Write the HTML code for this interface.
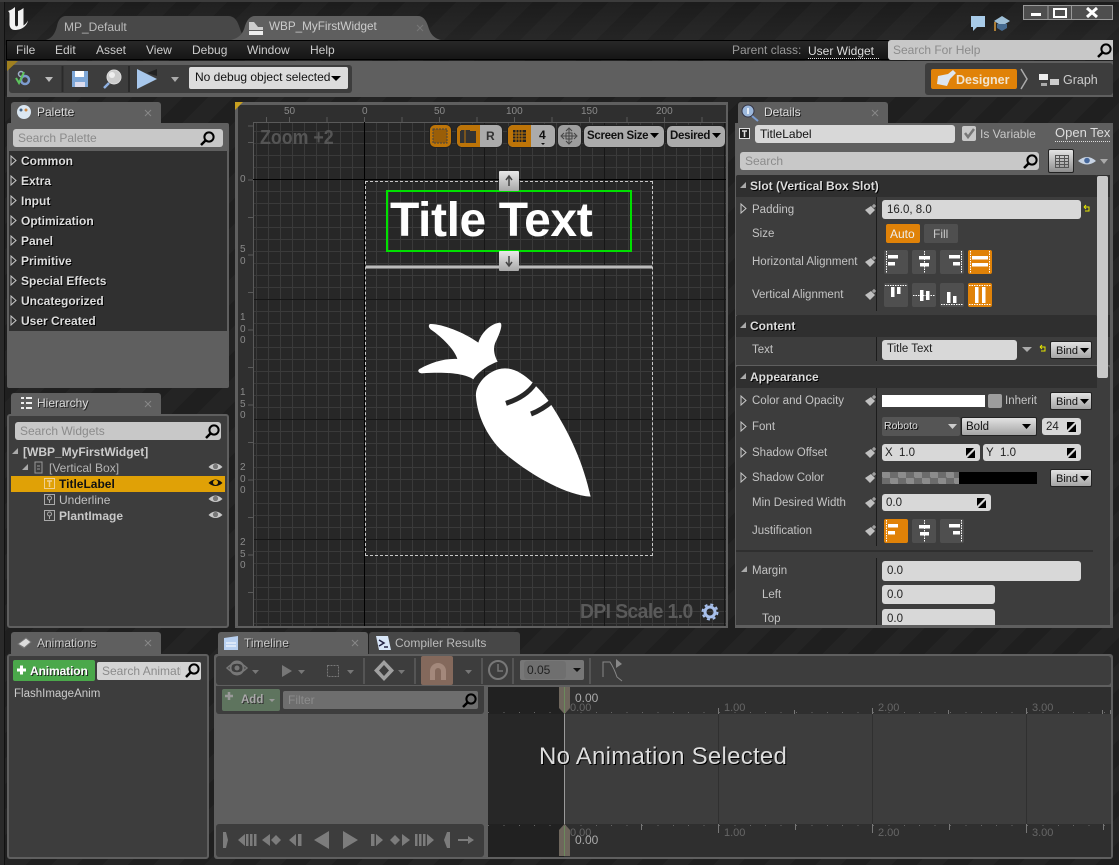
<!DOCTYPE html>
<html><head><meta charset="utf-8"><style>
html,body{margin:0;padding:0;background:#222}
#r{position:relative;width:1119px;height:865px;overflow:hidden;font-family:"Liberation Sans",sans-serif;font-size:12px;color:#c4c4c4;background:#212121 repeating-linear-gradient(135deg,#242424 0 18px,#1f1f1f 18px 36px)}
#r div{position:absolute;box-sizing:border-box}
.t{white-space:nowrap;line-height:16px;height:16px}
.b{font-weight:bold;color:#ddd;text-shadow:1px 1px 0 #000}
.f{background:#d8d8d8;border-radius:3px;color:#222}
.s{background:#c8c8c8;border-radius:3px;color:#8b8b8b}
.tab{background:#5f5f5f;border-radius:3px 3px 0 0}
.h{background:#2f2f2f;border-radius:2px 2px 0 0}
.bd{background:linear-gradient(#e2e2e2,#a4a4a4);border:1px solid #222;border-radius:2px;color:#111}
.g{background:#ababab;border-radius:6px;color:#111;border:1px solid #222}
.o{background:#bd7408}
.rl{font-size:10px;color:#8a8a8a;line-height:11.5px !important;height:36px !important}
svg{position:absolute;left:0;top:0}
</style></head><body><div id="r">

<div style="left:0;top:0;width:1119px;height:40px;background:linear-gradient(rgba(0,0,0,.12),rgba(70,70,70,.14))"></div>
<div style="left:0;top:0;width:5px;height:865px;background:#2a2a2a;border-right:1px solid #111"></div>
<div style="left:0;top:0;width:1119px;height:2px;background:#3c3c3c"></div>

<!-- window tabs -->
<svg width="460" height="41" viewBox="0 0 460 41">
<path d="M46 40C52 38 55 34 57 26C58 20 61 16 66 16H228C234 16 237 20 239 26L244 40Z" fill="#484848"/>
<path d="M231 40C239 38 243 34 245 26C247 20 250 16 255 16H418C423 16 426 20 428 26C430 33 433 38 441 40Z" fill="#5f5f5f"/>
</svg>
<div class="t" style="left:64px;top:19px;color:#bbb">MP_Default</div>
<div class="t" style="left:269px;top:19px;color:#ccc;font-size:11.7px">WBP_MyFirstWidget</div>

<!-- menu -->
<div style="left:6px;top:40px;width:1107px;height:20px;background:linear-gradient(#282828,#161616);border:1px solid #000;border-right:0"></div>
<div class="t" style="left:16px;top:42px;color:#ccc">File</div>
<div class="t" style="left:55px;top:42px;color:#ccc">Edit</div>
<div class="t" style="left:96px;top:42px;color:#ccc">Asset</div>
<div class="t" style="left:146px;top:42px;color:#ccc">View</div>
<div class="t" style="left:192px;top:42px;color:#ccc">Debug</div>
<div class="t" style="left:247px;top:42px;color:#ccc">Window</div>
<div class="t" style="left:310px;top:42px;color:#ccc">Help</div>
<div class="t" style="left:732px;top:42px;color:#999">Parent class:</div>
<div class="t" style="left:808px;top:43px;color:#ddd;border-bottom:1px dotted #ddd;height:16px;width:71px;overflow:hidden">User Widget</div>
<div class="s" style="left:888px;top:40px;width:225px;height:20px;border-radius:3px 0 0 3px"></div>
<div class="t" style="left:893px;top:42px;color:#8b8b8b">Search For Help</div>

<!-- toolbar -->
<div style="left:7px;top:61px;width:1106px;height:36px;background:#5f5f5f"></div>
<div style="left:9px;top:65px;width:343px;height:28px;background:#3d3d3d;border-radius:3px"></div>
<div style="left:189px;top:67px;width:159px;height:22px;background:#dcdcdc;border-radius:2px"></div>
<div class="t" style="left:195px;top:69px;color:#111;font-size:12px">No debug object selected</div>
<div style="left:925px;top:63px;width:188px;height:32px;background:#3d3d3d;border-radius:3px"></div>
<div style="left:931px;top:69px;width:86px;height:20px;background:#e08208;border-radius:2px"></div>
<div class="t" style="left:956px;top:72px;color:#f0e4d0;font-weight:bold;font-size:12.5px">Designer</div>
<div class="t" style="left:1063px;top:72px;color:#ccc;font-size:12.5px">Graph</div>

<!-- palette -->
<div class="tab" style="left:11px;top:102px;width:150px;height:22px"></div>
<div class="t" style="left:37px;top:104px;color:#ddd;text-shadow:1px 1px 0 #222">Palette</div>
<div style="left:7px;top:123px;width:222px;height:265px;background:#5f5f5f;border-radius:2px"></div>
<div class="s" style="left:13px;top:129px;width:210px;height:18px"></div>
<div class="t" style="left:18px;top:130px;color:#8b8b8b">Search Palette</div>
<div style="left:9px;top:151px;width:218px;height:180px;background:#303030"></div>
<div class="t b" style="left:21px;top:153px">Common</div>
<div class="t b" style="left:21px;top:173px">Extra</div>
<div class="t b" style="left:21px;top:193px">Input</div>
<div class="t b" style="left:21px;top:213px">Optimization</div>
<div class="t b" style="left:21px;top:233px">Panel</div>
<div class="t b" style="left:21px;top:253px">Primitive</div>
<div class="t b" style="left:21px;top:273px">Special Effects</div>
<div class="t b" style="left:21px;top:293px">Uncategorized</div>
<div class="t b" style="left:21px;top:313px">User Created</div>

<!-- hierarchy -->
<div class="tab" style="left:11px;top:393px;width:150px;height:22px"></div>
<div class="t" style="left:37px;top:395px;color:#ddd;text-shadow:1px 1px 0 #222">Hierarchy</div>
<div style="left:7px;top:414px;width:222px;height:214px;background:#3d3d3d;border:2px solid #5f5f5f;border-radius:3px"></div>
<div class="s" style="left:15px;top:422px;width:206px;height:18px"></div>
<div class="t" style="left:20px;top:423px;color:#8b8b8b">Search Widgets</div>
<div class="t" style="left:23px;top:444px;font-weight:bold;color:#ccc">[WBP_MyFirstWidget]</div>
<div class="t" style="left:49px;top:460px;color:#b4b4b4">[Vertical Box]</div>
<div style="left:11px;top:476px;width:214px;height:16px;background:#e0a106"></div>
<div class="t" style="left:59px;top:476px;font-weight:bold;color:#111">TitleLabel</div>
<div class="t" style="left:59px;top:492px;color:#c0c0c0">Underline</div>
<div class="t" style="left:59px;top:508px;font-weight:bold;color:#c8c8c8">PlantImage</div>

<!-- designer -->
<div style="left:235px;top:102px;width:493px;height:526px;background:#2f2f2f;border:3px solid #5f5f5f;border-bottom-width:2px;border-right-width:2px"></div>
<div style="left:253px;top:122px;width:473px;height:504px;background-color:#272727;background-image:linear-gradient(#161616 1px,transparent 1px),linear-gradient(90deg,#161616 1px,transparent 1px),linear-gradient(#3a3a3a 1px,transparent 1px),linear-gradient(90deg,#3a3a3a 1px,transparent 1px);background-size:120px 120px,120px 120px,12px 12px,12px 12px;background-position:0 57px,111px 0,0 9px,3px 0"></div>
<div style="left:253px;top:122px;width:473px;height:1px;background:#5a5a5a"></div>
<div style="left:253px;top:122px;width:1px;height:504px;background:#5a5a5a"></div>
<div style="left:364px;top:122px;width:1px;height:504px;background:#000"></div>
<div style="left:253px;top:179px;width:473px;height:1px;background:#000"></div>
<div style="left:253px;top:117px;width:473px;height:5px;background:repeating-linear-gradient(90deg,#5a5a5a 0 1px,transparent 1px 37.5px);background-position:36px 0"></div>
<div style="left:248px;top:122px;width:5px;height:504px;background:repeating-linear-gradient(#5a5a5a 0 1px,transparent 1px 37.5px);background-position:0 20px"></div>
<div class="t" style="left:284px;top:104px;font-size:10px;color:#8a8a8a">50</div>
<div class="t" style="left:362px;top:104px;font-size:10px;color:#8a8a8a">0</div>
<div class="t" style="left:434px;top:104px;font-size:10px;color:#8a8a8a">50</div>
<div class="t" style="left:506px;top:104px;font-size:10px;color:#8a8a8a">100</div>
<div class="t" style="left:581px;top:104px;font-size:10px;color:#8a8a8a">150</div>
<div class="t" style="left:656px;top:104px;font-size:10px;color:#8a8a8a">200</div>
<div class="t" style="left:240px;top:172px;font-size:10px;color:#8a8a8a">0</div>
<div class="t rl" style="left:240px;top:244px">5<br>0</div>
<div class="t rl" style="left:240px;top:312px">1<br>0<br>0</div>
<div class="t rl" style="left:240px;top:387px">1<br>5<br>0</div>
<div class="t rl" style="left:240px;top:462px">2<br>0<br>0</div>
<div class="t rl" style="left:240px;top:537px">2<br>5<br>0</div>
<div class="t" style="left:260px;top:129px;font-size:20px;font-weight:bold;color:#555;line-height:18px;height:18px;transform:scaleX(.89);transform-origin:0 0">Zoom +2</div>
<div class="t" style="left:580px;top:603px;font-size:20px;font-weight:bold;color:#5a5a5a;letter-spacing:-.6px;line-height:18px;height:18px;transform:scaleX(.965);transform-origin:0 0">DPI Scale 1.0</div>

<!-- widget -->
<div style="left:365px;top:181px;width:288px;height:375px;border:1px dashed #c8c8c8"></div>
<div style="left:366px;top:265px;width:286px;height:4px;background:linear-gradient(#555,#ddd 50%,#555)"></div>
<div style="left:386px;top:190px;width:246px;height:62px;border:2px solid #00e000"></div>
<div class="t" style="left:390px;top:193px;font-size:48px;font-weight:bold;color:#fff;line-height:56px;height:56px;letter-spacing:-.4px">Title Text</div>
<div style="left:499px;top:171px;width:20px;height:20px;background:linear-gradient(#e8e8e8,#a8a8a8);border-radius:1px"></div>
<div style="left:499px;top:251px;width:20px;height:20px;background:linear-gradient(#e8e8e8,#a8a8a8);border-radius:1px"></div>

<!-- designer toolbar -->
<div class="g o" style="left:429px;top:124px;width:23px;height:24px"></div>
<div class="g" style="left:456px;top:124px;width:47px;height:24px"></div>
<div class="o" style="left:457px;top:125px;width:23px;height:22px;border-radius:5px 0 0 5px"></div>
<div class="t" style="left:486px;top:128px;font-weight:bold;color:#333">R</div>
<div class="g" style="left:507px;top:124px;width:49px;height:24px"></div>
<div class="o" style="left:508px;top:125px;width:23px;height:22px;border-radius:5px 0 0 5px"></div>
<div class="t" style="left:539px;top:127px;font-weight:bold;color:#111">4</div>
<div class="g" style="left:557px;top:124px;width:25px;height:24px;background:#9e9e9e"></div>
<div class="g" style="left:583px;top:125px;width:82px;height:23px"></div>
<div class="t" style="left:587px;top:128px;font-weight:bold;font-size:11.5px;color:#111;letter-spacing:-.3px">Screen Size</div>
<div class="g" style="left:666px;top:125px;width:60px;height:23px"></div>
<div class="t" style="left:670px;top:128px;font-weight:bold;font-size:11.5px;color:#111;letter-spacing:-.3px">Desired</div>

<!-- details -->
<div class="tab" style="left:738px;top:102px;width:150px;height:22px"></div>
<div class="t" style="left:764px;top:104px;color:#ddd;text-shadow:1px 1px 0 #222">Details</div>
<div style="left:735px;top:123px;width:378px;height:505px;background:#5f5f5f"></div>
<div class="f" style="left:755px;top:125px;width:200px;height:18px"></div>
<div class="t" style="left:760px;top:126px;color:#111">TitleLabel</div>
<div style="left:962px;top:126px;width:14px;height:15px;background:#c8c8c8;border-radius:2px"></div>
<div class="t" style="left:980px;top:126px;color:#c8c8c8">Is Variable</div>
<div class="t" style="left:1055px;top:125px;width:55px;overflow:hidden;border-bottom:1px dotted #ddd;height:17px;color:#ddd;font-size:13px">Open Text</div>
<div class="s" style="left:740px;top:152px;width:299px;height:18px"></div>
<div class="t" style="left:745px;top:153px;color:#8b8b8b">Search</div>
<div style="left:1048px;top:149px;width:26px;height:24px;background:linear-gradient(#e4e4e4,#8e8e8e);border:1px solid #222;border-radius:2px"></div>

<div style="left:736px;top:175px;width:374px;height:140px;background:#3d3d3d;border-radius:3px 3px 0 0"></div>
<div class="h" style="left:736px;top:175px;width:361px;height:22px"></div>
<div class="t b" style="left:750px;top:178px">Slot (Vertical Box Slot)</div>
<div style="left:736px;top:315px;width:374px;height:50px;background:#3d3d3d;border-radius:3px 3px 0 0"></div>
<div class="h" style="left:736px;top:315px;width:361px;height:22px"></div>
<div class="t b" style="left:750px;top:318px">Content</div>
<div style="left:736px;top:366px;width:374px;height:259px;background:#3d3d3d;border-radius:3px 3px 0 0"></div>
<div class="h" style="left:736px;top:366px;width:361px;height:22px"></div>
<div class="t b" style="left:750px;top:369px">Appearance</div>
<div style="left:1097px;top:175px;width:13px;height:22px;background:#2f2f2f"></div>
<div style="left:1097px;top:315px;width:13px;height:22px;background:#2f2f2f"></div>
<div style="left:1097px;top:176px;width:11px;height:202px;background:#c8c8c8;border-radius:2px"></div>

<div style="left:876px;top:197px;width:1px;height:114px;background:#1c1c1c"></div>
<div style="left:876px;top:337px;width:1px;height:24px;background:#1c1c1c"></div>
<div style="left:876px;top:388px;width:1px;height:158px;background:#1c1c1c"></div>
<div style="left:876px;top:558px;width:1px;height:67px;background:#1c1c1c"></div>
<div style="left:736px;top:550px;width:357px;height:2px;background:#2f2f2f"></div>

<div class="t" style="left:752px;top:202px;font-size:11.5px">Padding</div>
<div class="t" style="left:752px;top:226px;font-size:11.5px">Size</div>
<div class="t" style="left:752px;top:254px;font-size:11.5px">Horizontal Alignment</div>
<div class="t" style="left:752px;top:287px;font-size:11.5px">Vertical Alignment</div>
<div class="t" style="left:752px;top:342px;font-size:11.5px">Text</div>
<div class="t" style="left:752px;top:393px;font-size:11.5px">Color and Opacity</div>
<div class="t" style="left:752px;top:419px;font-size:11.5px">Font</div>
<div class="t" style="left:752px;top:445px;font-size:11.5px">Shadow Offset</div>
<div class="t" style="left:752px;top:470px;font-size:11.5px">Shadow Color</div>
<div class="t" style="left:752px;top:495px;font-size:11.5px">Min Desired Width</div>
<div class="t" style="left:752px;top:523px;font-size:11.5px">Justification</div>
<div class="t" style="left:752px;top:563px;font-size:11.5px">Margin</div>
<div class="t" style="left:762px;top:587px;font-size:11.5px">Left</div>
<div class="t" style="left:762px;top:611px;font-size:11.5px">Top</div>

<div class="f" style="left:882px;top:200px;width:199px;height:19px"></div>
<div class="t" style="left:887px;top:202px;color:#222;font-size:11.5px">16.0, 8.0</div>
<div style="left:886px;top:224px;width:34px;height:19px;background:#e08208;border-radius:2px"></div>
<div class="t" style="left:890px;top:226px;color:#eee">Auto</div>
<div style="left:924px;top:224px;width:34px;height:19px;background:#4f4f4f;border-radius:2px"></div>
<div class="t" style="left:933px;top:226px;color:#c8c8c8">Fill</div>
<div class="f" style="left:882px;top:340px;width:135px;height:20px"></div>
<div class="t" style="left:887px;top:341px;color:#222;font-size:11.5px">Title Text</div>
<div class="t bd" style="left:1050px;top:341px;width:42px;height:18px;line-height:18px;padding-left:5px;font-size:11px">Bind</div>
<div style="left:882px;top:395px;width:103px;height:12px;background:#fff"></div>
<div style="left:988px;top:394px;width:14px;height:14px;background:#9d9d9d;border-radius:2px"></div>
<div class="t" style="left:1005px;top:393px;font-size:11.5px">Inherit</div>
<div class="t bd" style="left:1050px;top:392px;width:42px;height:18px;line-height:18px;padding-left:5px;font-size:11px">Bind</div>
<div style="left:882px;top:417px;width:78px;height:19px;background:#555;border-radius:2px"></div>
<div class="t" style="left:884px;top:418px;color:#ddd;font-size:10.5px;text-shadow:1px 1px 0 #000">Roboto</div>
<div class="bd" style="left:961px;top:417px;width:76px;height:19px"></div>
<div class="t" style="left:966px;top:419px;color:#111;font-size:11.5px">Bold</div>
<div class="f" style="left:1042px;top:418px;width:39px;height:17px"></div>
<div class="t" style="left:1046px;top:419px;color:#222;font-size:11.5px">24</div>
<div class="f" style="left:882px;top:444px;width:98px;height:17px"></div>
<div class="t" style="left:885px;top:445px;color:#222;font-size:11.5px">X</div>
<div class="t" style="left:899px;top:445px;color:#222;font-size:11.5px">1.0</div>
<div class="f" style="left:983px;top:444px;width:98px;height:17px"></div>
<div class="t" style="left:986px;top:445px;color:#222;font-size:11.5px">Y</div>
<div class="t" style="left:1000px;top:445px;color:#222;font-size:11.5px">1.0</div>
<div style="left:882px;top:472px;width:77px;height:12px;background-color:#8c8c8c;background-image:linear-gradient(45deg,#6c6c6c 25%,transparent 25%,transparent 75%,#6c6c6c 75%),linear-gradient(45deg,#6c6c6c 25%,transparent 25%,transparent 75%,#6c6c6c 75%);background-size:16px 12px;background-position:0 0,8px 6px"></div>
<div style="left:959px;top:472px;width:78px;height:12px;background:#000"></div>
<div class="t bd" style="left:1050px;top:469px;width:42px;height:18px;line-height:18px;padding-left:5px;font-size:11px">Bind</div>
<div class="f" style="left:882px;top:494px;width:109px;height:17px"></div>
<div class="t" style="left:886px;top:495px;color:#222;font-size:11.5px">0.0</div>
<div class="f" style="left:882px;top:561px;width:199px;height:20px"></div>
<div class="t" style="left:887px;top:563px;color:#222;font-size:11.5px">0.0</div>
<div class="f" style="left:882px;top:585px;width:113px;height:19px"></div>
<div class="t" style="left:887px;top:587px;color:#222;font-size:11.5px">0.0</div>
<div class="f" style="left:882px;top:609px;width:113px;height:16px;border-radius:3px 3px 0 0"></div>
<div class="t" style="left:887px;top:611px;color:#222;font-size:11.5px">0.0</div>

<!-- animations -->
<div class="tab" style="left:11px;top:632px;width:150px;height:23px"></div>
<div class="t" style="left:37px;top:635px;color:#ccc;text-shadow:1px 1px 0 #222">Animations</div>
<div style="left:7px;top:654px;width:202px;height:205px;background:#3d3d3d;border:2px solid #5f5f5f;border-radius:3px"></div>
<div style="left:13px;top:660px;width:82px;height:21px;background:#4ba84b;border-radius:2px"></div>
<div class="t" style="left:30px;top:663px;font-weight:bold;color:#fff;text-shadow:1px 1px 0 #222;font-size:12px;letter-spacing:-.1px">Animation</div>
<div class="s" style="left:97px;top:662px;width:104px;height:18px;border-radius:2px;background:#d4d4d4"></div>
<div class="t" style="left:102px;top:663px;color:#8b8b8b;width:79px;overflow:hidden;font-size:12px">Search Animation</div>
<div class="t" style="left:14px;top:686px;color:#ccc;font-size:11.5px">FlashImageAnim</div>

<!-- timeline -->
<div class="tab" style="left:218px;top:632px;width:150px;height:23px"></div>
<div class="t" style="left:244px;top:635px;color:#ccc;text-shadow:1px 1px 0 #222">Timeline</div>
<div style="left:369px;top:632px;width:151px;height:23px;background:#474747;border-radius:3px 3px 0 0"></div>
<div class="t" style="left:395px;top:635px;color:#bbb">Compiler Results</div>
<div style="left:214px;top:654px;width:899px;height:205px;background:#5f5f5f;border-radius:3px"></div>
<div style="left:216px;top:656px;width:895px;height:29px;background:#3d3d3d;border-radius:3px"></div>
<div style="left:421px;top:656px;width:32px;height:29px;background:#84695c;border-radius:2px"></div>
<div style="left:520px;top:660px;width:64px;height:20px;background:#777;border-radius:2px"></div>
<div style="left:524px;top:661px;width:42px;height:18px;background:#6f6f6f;border-radius:3px"></div>
<div class="t" style="left:527px;top:662px;color:#222">0.05</div>

<div style="left:216px;top:686px;width:268px;height:28px;background:#3d3d3d;border-radius:0 0 3px 3px"></div>
<div style="left:222px;top:689px;width:58px;height:22px;background:#5e745e;border-radius:2px"></div>
<div class="t" style="left:241px;top:692px;color:#aaa;font-weight:bold;text-shadow:1px 1px 0 #333;font-size:11.5px">Add</div>
<div style="left:283px;top:691px;width:195px;height:18px;background:#6e6e6e;border-radius:2px"></div>
<div class="t" style="left:288px;top:692px;color:#8c8c8c">Filter</div>
<div style="left:216px;top:824px;width:268px;height:33px;background:#3d3d3d;border-radius:3px"></div>

<div style="left:488px;top:687px;width:623px;height:27px;background:#2f2f2f"></div>
<div style="left:488px;top:687px;width:76px;height:27px;background:#212121"></div>
<div style="left:488px;top:714px;width:623px;height:110px;background:#3d3d3d"></div>
<div style="left:488px;top:714px;width:76px;height:110px;background:#272727"></div>
<div style="left:488px;top:824px;width:623px;height:33px;background:#2f2f2f"></div>
<div style="left:488px;top:824px;width:76px;height:33px;background:#212121"></div>
<div style="left:564px;top:714px;width:1px;height:110px;background:#9a9a9a"></div>
<div style="left:718px;top:714px;width:1px;height:110px;background:#303030"></div>
<div style="left:872px;top:714px;width:1px;height:110px;background:#303030"></div>
<div style="left:1026px;top:714px;width:1px;height:110px;background:#303030"></div>
<div style="left:488px;top:708px;width:623px;height:6px;background:repeating-linear-gradient(90deg,transparent 0 76px,#777 76px 77px,transparent 77px 154px)"></div>
<div style="left:488px;top:710px;width:623px;height:4px;background:repeating-linear-gradient(90deg,#777 0 1px,transparent 1px 154px);background-position:-1px 0;left:641px;width:470px"></div>
<div style="left:488px;top:824px;width:623px;height:9px;background:repeating-linear-gradient(90deg,transparent 0 76px,#777 76px 77px,transparent 77px 154px)"></div>
<div style="left:641px;top:824px;width:470px;height:6px;background:repeating-linear-gradient(90deg,#777 0 1px,transparent 1px 154px)"></div>
<div style="left:488px;top:712px;width:623px;height:1px;background:repeating-linear-gradient(90deg,#666 0 1px,transparent 1px 15.4px)"></div>
<div style="left:488px;top:825px;width:623px;height:1px;background:repeating-linear-gradient(90deg,#666 0 1px,transparent 1px 15.4px)"></div>

<div class="t" style="left:570px;top:700px;font-size:11px;color:#666">0.00</div>
<div class="t" style="left:724px;top:700px;font-size:11px;color:#666">1.00</div>
<div class="t" style="left:878px;top:700px;font-size:11px;color:#666">2.00</div>
<div class="t" style="left:1032px;top:700px;font-size:11px;color:#666">3.00</div>
<div class="t" style="left:570px;top:825px;font-size:11px;color:#666">0.00</div>
<div class="t" style="left:724px;top:825px;font-size:11px;color:#666">1.00</div>
<div class="t" style="left:878px;top:825px;font-size:11px;color:#666">2.00</div>
<div class="t" style="left:1032px;top:825px;font-size:11px;color:#666">3.00</div>
<div class="t" style="left:575px;top:690px;font-size:12px;color:#aaa">0.00</div>
<div class="t" style="left:575px;top:832px;font-size:12px;color:#aaa">0.00</div>
<div class="t" style="left:539px;top:743px;font-size:24px;line-height:28px;height:28px;color:#ddd;text-shadow:1px 1px 0 #000;letter-spacing:.25px">No Animation Selected</div>

<!-- icons -->
<svg width="1119" height="865" viewBox="0 0 1119 865">
<defs>
<g id="mg"><circle cx="9" cy="6" r="4.6" fill="none" stroke="#000" stroke-width="2"/><path d="M5.500 9.500L1 14" stroke="#000" stroke-width="2.500"/></g>
<path id="tr" d="M0 0L5 4.500L0 9Z" fill="none" stroke="#c8c8c8"/>
<path id="ex" d="M0 6L6 0V6Z" fill="#aaa"/>
<g id="eye"><path d="M0 5Q7-2 14 5Q7 11 0 5Z" fill="#c8c8c8"/><circle cx="7" cy="4.500" r="2.600" fill="#777"/></g>
<g id="pin"><path d="M0 6L6 2L10 6L5 11Z" fill="#c0c0c0"/><path d="M7 2H11M9 0V4" stroke="#c0c0c0"/></g>
<g id="sp"><path d="M0 0H8L0 8Z M9 2V10H1Z" fill="#000"/></g>
<path id="dn" d="M0 0H9L4.500 5Z" fill="#000"/>
<path id="dg" d="M0 0H10L5 5Z" fill="#aaa"/>
<g id="bt"><rect width="24" height="24" rx="2" fill="#4f4f4f"/></g>
<g id="bo"><rect width="24" height="24" rx="2" fill="#e08208"/></g>
<path id="yr" d="M1 1H6V5H2M1 1L3 -1M1 1L3 3" fill="none" stroke="#e8e800"/>
</defs>

<!-- UE logo -->
<path d="M8 11C10 10.500 12 9.500 15 7V24C15 27 17.500 27 18 25V11C20 10.500 21.500 9.500 23.500 8V25.500C25 24.500 26.500 23 28 20.500C27 26 22 29.500 16 30C11 30.500 9.500 27 9.500 24V14C9.500 12.500 9 12 8 11Z" fill="#f2f2f2"/>
<!-- window controls -->
<rect x="1023.500" y="5.500" width="89" height="14" fill="#4e4e4e" stroke="#999"/>
<path d="M1048 5V20M1071.500 5V20" stroke="#999"/>
<rect x="1031" y="13" width="10" height="3" fill="#fff"/>
<rect x="1054" y="9" width="12" height="8" fill="none" stroke="#fff" stroke-width="2"/>
<path d="M1087 8L1097 17M1097 8L1087 17" stroke="#fff" stroke-width="3"/>
<path d="M971 16H985V27H977L973 31V27H971Z" fill="#a8cbe8"/>
<path d="M994 21L1002 16L1010 21L1002 26Z" fill="#9fc0d8"/><path d="M997 24V28L1002 31L1007 28V24Z" fill="#456a90"/><path d="M995 22V31" stroke="#d89b3c" stroke-width="1.500"/>
<!-- tab icon -->
<path d="M249 22H254L258 27H263V30H249Z" fill="#ccc"/><rect x="249" y="31" width="14" height="4" fill="#eee"/>
<path d="M417 25L423 31M423 25L417 31" stroke="#777"/>
<use href="#mg" x="1097" y="43"/>

<!-- toolbar icons -->
<circle cx="25" cy="80" r="4" fill="none" stroke="#7d9ccf" stroke-width="2.500"/><circle cx="21" cy="74" r="2.500" fill="none" stroke="#a0b0cc" stroke-width="1.500"/><path d="M16 78L19 83L24 72" stroke="#5ec45e" stroke-width="2" fill="none"/>
<path d="M45 77H53L49 82Z" fill="#bbb"/>
<path d="M62.500 66V92M129 66V92" stroke="#2a2a2a" stroke-width="2"/>
<rect x="72" y="71" width="16" height="16" fill="#7fa8d8"/><rect x="75" y="71" width="9" height="6" fill="#fff"/><rect x="75" y="82" width="10" height="5" fill="#dde"/>
<circle cx="114" cy="77" r="7" fill="#ccc" stroke="#ddd"/><circle cx="112" cy="75" r="3" fill="#eee"/><path d="M109 83L104 88" stroke="#8fb0e0" stroke-width="2.500"/>
<path d="M137 69L157 79L137 89Z" fill="#a8c8ec"/><path d="M147 73L157 69V76Z" fill="#222"/>
<path d="M171 77H179L175 82Z" fill="#aaa"/>
<path d="M331 76H341L336 81Z" fill="#000"/>
<path d="M938 76L948 74L953 70L956 73L950 79L947 86L937 84Z" fill="#dde6f0"/>
<path d="M1021 69L1027 79L1021 89" fill="none" stroke="#aaa" stroke-width="1.500"/>
<rect x="1039" y="74" width="9" height="6" fill="#eee"/><rect x="1050" y="79" width="9" height="6" fill="#ccc"/><rect x="1041" y="83" width="6" height="3" fill="#aaa"/>

<!-- panel tab icons -->
<circle cx="24" cy="112" r="7" fill="#dbe7f2"/><circle cx="21" cy="110" r="1.500" fill="#468"/><circle cx="26" cy="110" r="1.500" fill="#c84"/>
<path d="M145 110L151 116M151 110L145 116" stroke="#888"/>
<use href="#mg" x="200" y="131"/>
<use href="#tr" x="11" y="156"/><use href="#tr" x="11" y="176"/><use href="#tr" x="11" y="196"/><use href="#tr" x="11" y="216"/><use href="#tr" x="11" y="236"/><use href="#tr" x="11" y="256"/><use href="#tr" x="11" y="276"/><use href="#tr" x="11" y="296"/><use href="#tr" x="11" y="316"/>
<path d="M21 398H24M26 398H32M21 403H24M26 403H32M21 408H24M26 408H32" stroke="#eee" stroke-width="2"/>
<path d="M145 401L151 407M151 401L145 407" stroke="#888"/>
<use href="#mg" x="205" y="424"/>
<use href="#ex" x="12" y="448"/><use href="#ex" x="22" y="464"/>
<rect x="35" y="462" width="7" height="11" fill="none" stroke="#999"/><path d="M37 466H40M37 469H40" stroke="#999"/>
<rect x="44.500" y="478.500" width="10" height="10" fill="none" stroke="#f0d090"/><path d="M47 481H52M49.500 481V487" stroke="#f0d090" stroke-width="1.500"/>
<rect x="44.500" y="494.500" width="10" height="10" fill="none" stroke="#aaa"/><circle cx="49.500" cy="498" r="2" fill="none" stroke="#aaa"/><path d="M49.500 500V503" stroke="#aaa"/>
<rect x="44.500" y="510.500" width="10" height="10" fill="none" stroke="#aaa"/><circle cx="49.500" cy="514" r="2" fill="none" stroke="#aaa"/><path d="M49.500 516V519" stroke="#aaa"/>
<use href="#eye" x="208.500" y="462"/>
<g transform="translate(208.500,478)"><path d="M0 5Q7-2 14 5Q7 11 0 5Z" fill="#111"/><circle cx="7" cy="4.500" r="2.500" fill="#e0a106"/></g>
<use href="#eye" x="208.500" y="494"/><use href="#eye" x="208.500" y="510"/>

<!-- designer corner -->
<path d="M235 102H243L235 110Z" fill="#c8a020"/>
<path d="M7 61H18L7 71Z" fill="#a08020"/>
<!-- designer tool glyphs -->
<rect x="433" y="129" width="14" height="14" fill="#9a5e08" stroke="#444" stroke-dasharray="2 1"/>
<path d="M460 131H476V143H460Z M461 130H470V132H461Z" fill="#333"/><path d="M465 130V144" stroke="#bd7408"/>
<rect x="513" y="130" width="13" height="12" fill="#222"/><path d="M516 130V142M519 130V142M522 130V142M513 133H526M513 136H526M513 139H526" stroke="#bd7408"/>
<path d="M541 143H545L543 145Z" fill="#111"/>
<path d="M569 129V143M562 136H576M566 131L569 128L572 131M566 141L569 144L572 141M564 133L561 136L564 139M574 133L577 136L574 139" fill="none" stroke="#444"/>
<rect x="566" y="133" width="6" height="6" fill="none" stroke="#444"/>
<use href="#dn" x="650" y="133"/><use href="#dn" x="712" y="133"/>
<path d="M509 177V186M506 180L509 176L512 180" fill="none" stroke="#444" stroke-width="1.500"/>
<path d="M509 256V265M506 262L509 266L512 262" fill="none" stroke="#444" stroke-width="1.500"/>

<!-- carrot -->
<g transform="translate(400,300) scale(.3333)">
<path d="M90 72C120 70 190 95 235 128C245 95 275 70 300 68C310 72 300 100 285 130C278 150 285 170 293 185C265 195 235 215 220 238C195 222 150 215 65 220C52 218 52 208 62 205C90 190 130 175 172 177C165 150 125 110 92 88C85 82 85 74 90 72Z" fill="#fff"/>
<path d="M228 290C224 250 270 205 315 205C345 205 375 225 400 250C430 280 445 300 452 312C510 400 550 490 572 590C500 585 400 530 320 465C265 420 232 350 228 290Z" fill="#fff"/>
<path d="M318 310C355 298 385 280 404 252M393 342C420 332 440 318 458 302" fill="none" stroke="#272727" stroke-width="15"/>
</g>
<!-- gear -->
<circle cx="710" cy="612" r="5" fill="none" stroke="#a8c0ec" stroke-width="3"/>
<circle cx="710" cy="612" r="7.500" fill="none" stroke="#a8c0ec" stroke-width="2" stroke-dasharray="3 2.900"/>

<!-- details icons -->
<circle cx="748" cy="111" r="6" fill="#9cb8dc" stroke="#334"/><path d="M752 116L758 121" stroke="#7a9cd0" stroke-width="2"/><path d="M748 108V114" stroke="#fff" stroke-width="1.500"/>
<path d="M872 110L878 116M878 110L872 116" stroke="#888"/>
<rect x="739.500" y="128.500" width="10" height="10" fill="#222" stroke="#ddd"/><path d="M742 131H747M744.500 131V137" stroke="#ddd" stroke-width="1.500"/>
<path d="M965 133L968 137L974 129" fill="none" stroke="#777" stroke-width="2.500"/>
<use href="#mg" x="1023" y="154"/>
<path d="M1055.500 155.500H1068.500V167.500H1055.500ZM1055 158.500H1069M1055 161.500H1069M1055 164.500H1069M1059.500 155V168M1064.500 155V168" fill="none" stroke="#555"/>
<path d="M1078 161Q1087 153 1096 161Q1087 168 1078 161Z" fill="#c8d4e4"/><circle cx="1087" cy="160.500" r="2.800" fill="#46689c"/>
<path d="M1100 159H1108L1104 164Z" fill="#aaa"/>
<use href="#ex" x="740" y="182"/><use href="#ex" x="740" y="322"/><use href="#ex" x="740" y="373"/><use href="#ex" x="741" y="566"/>
<use href="#tr" x="741" y="204"/><use href="#tr" x="741" y="396"/><use href="#tr" x="741" y="422"/><use href="#tr" x="741" y="448"/><use href="#tr" x="741" y="473"/>
<use href="#pin" x="865" y="204"/><use href="#pin" x="865" y="256"/><use href="#pin" x="865" y="289"/><use href="#pin" x="865" y="395"/><use href="#pin" x="865" y="447"/><use href="#pin" x="865" y="472"/><use href="#pin" x="865" y="497"/><use href="#pin" x="865" y="525"/>
<use href="#yr" x="1083" y="206"/><use href="#yr" x="1039" y="346"/>
<use href="#dg" x="1022" y="347"/>
<use href="#dn" x="1080" y="348"/><use href="#dn" x="1080" y="399"/><use href="#dn" x="1080" y="476"/>
<path d="M948 424H957L952.500 429Z" fill="#ccc"/><use href="#dn" x="1022" y="424"/>
<use href="#sp" x="1067" y="422"/><use href="#sp" x="966" y="448"/><use href="#sp" x="1067" y="448"/><use href="#sp" x="977" y="498"/>

<!-- alignment -->
<g transform="translate(884,250)"><use href="#bt"/><path d="M2.500 1V23" stroke="#fff" stroke-dasharray="1.500 1"/><path d="M4 5H14V8.500H4ZM4 12H11V15.500H4Z" fill="#fff"/></g>
<g transform="translate(912,250)"><use href="#bt"/><path d="M12.500 1V23" stroke="#fff" stroke-dasharray="1.500 1"/><path d="M7 6H18V9.500H7ZM8 13H17V16.500H8Z" fill="#fff"/></g>
<g transform="translate(940,250)"><use href="#bt"/><path d="M21.500 1V23" stroke="#fff" stroke-dasharray="1.500 1"/><path d="M9 5H20V8.500H9ZM13 12H20V15.500H13Z" fill="#fff"/></g>
<g transform="translate(968,250)"><use href="#bo"/><path d="M2.500 1V23M21.500 1V23" stroke="#fff" stroke-dasharray="1.500 1"/><path d="M4 6H20V9.500H4ZM4 13H20V16.500H4Z" fill="#fff"/></g>
<g transform="translate(884,283)"><use href="#bt"/><path d="M1 2.500H23" stroke="#fff" stroke-dasharray="1.500 1"/><path d="M7 4H10.500V14H7ZM13 4H16.500V11H13Z" fill="#fff"/></g>
<g transform="translate(912,283)"><use href="#bt"/><path d="M1 12.500H23" stroke="#fff" stroke-dasharray="1.500 1"/><path d="M8 7H11.500V18H8ZM14 8H17.500V17H14Z" fill="#fff"/></g>
<g transform="translate(940,283)"><use href="#bt"/><path d="M1 21.500H23" stroke="#fff" stroke-dasharray="1.500 1"/><path d="M7 9H10.500V20H7ZM13 13H16.500V20H13Z" fill="#fff"/></g>
<g transform="translate(968,283)"><use href="#bo"/><path d="M1 2.500H23M1 21.500H23" stroke="#fff" stroke-dasharray="1.500 1"/><path d="M7 4H10.500V20H7ZM14 4H17.500V20H14Z" fill="#fff"/></g>
<g transform="translate(884,519)"><use href="#bo"/><path d="M2.500 1V23" stroke="#fff" stroke-dasharray="1.500 1"/><path d="M4 5H14V8.500H4ZM4 12H11V15.500H4Z" fill="#fff"/></g>
<g transform="translate(912,519)"><use href="#bt"/><path d="M12.500 1V23" stroke="#fff" stroke-dasharray="1.500 1"/><path d="M7 6H18V9.500H7ZM8 13H17V16.500H8Z" fill="#fff"/></g>
<g transform="translate(940,519)"><use href="#bt"/><path d="M21.500 1V23" stroke="#fff" stroke-dasharray="1.500 1"/><path d="M9 5H20V8.500H9ZM13 12H20V15.500H13Z" fill="#fff"/></g>

<!-- animations icons -->
<path d="M18 644L26 638L31 642L24 648ZM18 644L25 648" fill="#ddd" stroke="#777"/>
<path d="M145 640L151 646M151 640L145 646" stroke="#888"/>
<path d="M17 670H26M21.500 665.500V674.500" stroke="#fff" stroke-width="3"/>
<use href="#mg" x="185" y="663"/>
<!-- timeline icons -->
<path d="M224 638L238 636V650L224 650Z" fill="#b8d0f0"/><path d="M226 643H236M226 646H236" stroke="#fff"/>
<path d="M352 640L358 646M358 640L352 646" stroke="#888"/>
<path d="M376 636H388L391 650H379Z" fill="#d8e6f8"/><path d="M379 640L384 643L379 646M384 647H388" fill="none" stroke="#224" stroke-width="1.500"/>
<circle cx="237" cy="668" r="6.500" fill="none" stroke="#777" stroke-width="2"/><path d="M227 668Q237 658 247 668Q237 678 227 668Z" fill="none" stroke="#777" stroke-width="1.500"/><circle cx="237" cy="668" r="2.500" fill="#777"/>
<path d="M252 670H259L255.500 674Z M298 670H305L301.500 674Z M347 670H354L350.500 674Z M398 670H405L401.500 674Z M465 670H472L468.500 674Z" fill="#777"/>
<path d="M282 665L292 671L282 677Z" fill="#777"/>
<rect x="327.500" y="665.500" width="11" height="11" fill="none" stroke="#777" stroke-dasharray="2 1"/>
<path d="M384 660L394 670.500L384 681L374 670.500Z" fill="#a0a0a0"/><path d="M384 665L389 670.500L384 676L379 670.500Z" fill="#3d3d3d"/>
<path d="M364 658V684M415 658V684M482 658V684M513 658V684M590 658V684" stroke="#555" stroke-width="2"/>
<path d="M430 680V671A8 8 0 0 1 446 671V680H441V671A3 3 0 0 0 435 671V680Z" fill="#a3887b"/>
<circle cx="498" cy="670" r="9" fill="none" stroke="#777" stroke-width="2"/><path d="M498 664V671H503" fill="none" stroke="#777" stroke-width="1.500"/>
<path d="M573 668H581L577 672Z" fill="#111"/>
<path d="M603 677V662L610 662Q614 668 617 677L622 681" fill="none" stroke="#888"/><path d="M616 659L622 664L616 668Z" fill="#888"/>
<path d="M225 696H233M229 692V700" stroke="#999" stroke-width="2.500"/><path d="M269 699H275L272 702Z" fill="#999"/>
<use href="#mg" x="462" y="693"/>
<!-- transport -->
<g fill="#7c7c7c">
<path d="M223 832H226V848H223ZM226 832L228 840L226 848Z"/>
<path d="M245 834L238 840L245 846ZM246 834H248.500V846H246ZM250 834H252.500V846H250ZM254 834H256.500V846H254Z"/>
<path d="M270 834L262 840L270 846ZM276 835L281 840L276 845L271 840Z"/>
<path d="M296 834L289 840L296 846ZM298 834H301.500V846H298Z"/>
<path d="M329 831L314 840L329 849Z"/>
<path d="M343 831L358 840L343 849Z"/>
<path d="M371 834H374.500V846H371ZM376 834L383 840L376 846Z"/>
<path d="M395 835L400 840L395 845L390 840ZM402 834L410 840L402 846Z"/>
<path d="M415 834H417.500V846H415ZM419 834H421.500V846H419ZM423 834H425.500V846H423ZM427 834L434 840L427 846Z"/>
<path d="M447 832H450V848H447ZM447 832L444 840L447 848Z"/>
<path d="M458 839H470V841H458ZM468 836L474 840L468 844Z"/>
</g>
<!-- playheads -->
<path d="M559 687H570V708L564.500 714L559 708Z" fill="#6e665c"/><path d="M564.500 687V713" stroke="#6b8a5c"/>
<path d="M559 856H570V830L564.500 824L559 830Z" fill="#6e665c"/><path d="M564.500 826V856" stroke="#6b8a5c"/>
</svg>
</div></body></html>
